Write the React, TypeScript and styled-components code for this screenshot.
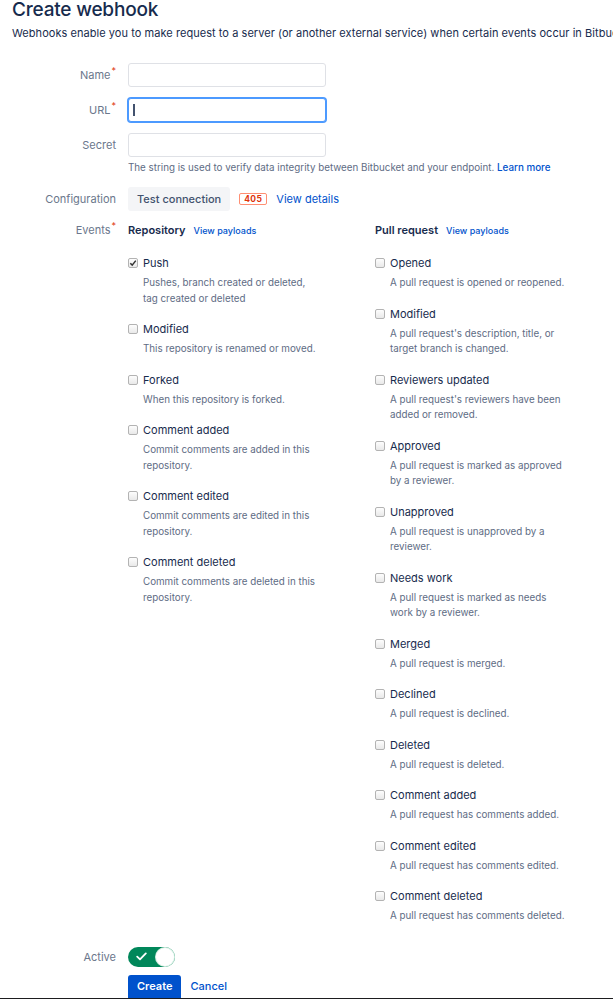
import React from "react";
import styled, { createGlobalStyle } from "styled-components";

const GlobalStyle = createGlobalStyle`
  html, body {
    margin: 0;
    background: #fff;
    overflow: hidden;
  }
  body {
    font-family: Inter, "Liberation Sans", Arial, sans-serif;
    color: #172b4d;
  }
`;

const Page = styled.div`
  padding: 0 12px;
  overflow: hidden;
`;

const Title = styled.h1`
  margin: 0;
  font-size: 19px;
  line-height: 20px;
  font-weight: 500;
  letter-spacing: -0.2px;
  color: #172b4d;
`;

const Intro = styled.p`
  margin: 5px 0 0;
  font-size: 11px;
  line-height: 16px;
  letter-spacing: 0.05px;
  white-space: nowrap;
  color: #172b4d;
`;

const Row = styled.div<{ $mt: number }>`
  display: grid;
  grid-template-columns: 104px 1fr;
  column-gap: 12px;
  margin-top: ${({ $mt }) => $mt}px;
`;

const Label = styled.div<{ $h: number }>`
  text-align: right;
  font-size: 11px;
  line-height: ${({ $h }) => $h}px;
  color: #6b778c;
  white-space: nowrap;
`;

const Req = styled.span`
  color: #de350b;
  font-size: 9px;
  vertical-align: top;
  position: relative;
  top: -4px;
  margin-left: 1px;
`;

const Field = styled.div<{ $focus?: boolean }>`
  box-sizing: border-box;
  width: 198px;
  height: 24px;
  border: 1px solid ${({ $focus }) => ($focus ? "#4c9aff" : "#dfe1e6")};
  box-shadow: ${({ $focus }) => ($focus ? "0 0 0 1px #4c9aff" : "none")};
  border-radius: 3px;
  background: #fff;
  display: flex;
  align-items: center;
  padding: 0 4px;
`;

const Caret = styled.span`
  width: 2px;
  height: 12px;
  background: #42526e;
`;

const Help = styled.div`
  margin-top: 3px;
  font-size: 9.8px;
  line-height: 16px;
  color: #5e6c84;
  white-space: nowrap;
`;

const Link = styled.a<{ $size?: number; $weight?: number }>`
  color: #0052cc;
  text-decoration: none;
  font-size: ${({ $size }) => ($size ? `${$size}px` : "inherit")};
  font-weight: ${({ $weight }) => $weight ?? "inherit"};
`;

const Inline = styled.div`
  display: flex;
  align-items: center;
`;

const GhostButton = styled.button`
  height: 24px;
  padding: 0 9px;
  border: 0;
  border-radius: 3px;
  background: #f4f5f7;
  color: #42526e;
  font-family: inherit;
  font-size: 11px;
  font-weight: 500;
`;

const Badge = styled.span`
  margin-left: 9px;
  box-sizing: border-box;
  height: 12px;
  padding: 0 4px;
  border: 1px solid #ff8f73;
  border-radius: 2px;
  font-size: 8.5px;
  line-height: 10px;
  font-weight: 700;
  color: #de350b;
  letter-spacing: 0.4px;
`;

const Spaced = styled.span`
  margin-left: 9px;
  font-size: 11px;
`;

const Columns = styled.div`
  display: grid;
  grid-template-columns: 247px 1fr;
`;

const GroupHead = styled.div`
  font-size: 11px;
  line-height: 16px;
  font-weight: 600;
  color: #172b4d;

  a {
    margin-left: 8px;
    font-weight: 500;
  }
`;

const List = styled.div`
  margin-top: 15px;
  display: flex;
  flex-direction: column;
  gap: 14px;
`;

const ItemHead = styled.div`
  display: flex;
  align-items: center;
  height: 18px;
  font-size: 11px;
  font-weight: 400;
  color: #172b4d;
`;

const Box = styled.span<{ $on?: boolean }>`
  box-sizing: border-box;
  width: 10px;
  height: 10px;
  margin-right: 5px;
  border: 1px solid #b3b3b3;
  border-radius: 2px;
  background: linear-gradient(#fdfdfd, #e9e9e9);
  display: flex;
  align-items: center;
  justify-content: center;
`;

const Desc = styled.div`
  margin-top: 3px;
  padding-left: 15px;
  max-width: 177px;
  font-size: 9.8px;
  line-height: 15.5px;
  color: #5e6c84;
`;

const Toggle = styled.div`
  box-sizing: border-box;
  width: 47px;
  height: 20px;
  border-radius: 10px;
  background: #00875a;
  display: flex;
  align-items: center;
  justify-content: space-between;
  padding: 0 1px 0 8px;
`;

const Knob = styled.span`
  width: 18px;
  height: 18px;
  border-radius: 50%;
  background: #fff;
  box-shadow: 0 0 0 1px #d6efe4;
`;

const Primary = styled.button`
  height: 23px;
  padding: 0 9px;
  border: 0;
  border-radius: 3px 3px 0 0;
  background: #0052cc;
  color: #fff;
  font-family: inherit;
  font-size: 11px;
  font-weight: 600;
`;

const BottomEdge = styled.div`
  height: 2px;
  background: #1d1d1f;
  margin: 0 -12px;
`;

type Ev = { name: string; desc: string; on?: boolean };

const repoEvents: Ev[] = [
  { name: "Push", desc: "Pushes, branch created or deleted, tag created or deleted", on: true },
  { name: "Modified", desc: "This repository is renamed or moved." },
  { name: "Forked", desc: "When this repository is forked." },
  { name: "Comment added", desc: "Commit comments are added in this repository." },
  { name: "Comment edited", desc: "Commit comments are edited in this repository." },
  { name: "Comment deleted", desc: "Commit comments are deleted in this repository." },
];

const prEvents: Ev[] = [
  { name: "Opened", desc: "A pull request is opened or reopened." },
  { name: "Modified", desc: "A pull request's description, title, or target branch is changed." },
  { name: "Reviewers updated", desc: "A pull request's reviewers have been added or removed." },
  { name: "Approved", desc: "A pull request is marked as approved by a reviewer." },
  { name: "Unapproved", desc: "A pull request is unapproved by a reviewer." },
  { name: "Needs work", desc: "A pull request is marked as needs work by a reviewer." },
  { name: "Merged", desc: "A pull request is merged." },
  { name: "Declined", desc: "A pull request is declined." },
  { name: "Deleted", desc: "A pull request is deleted." },
  { name: "Comment added", desc: "A pull request has comments added." },
  { name: "Comment edited", desc: "A pull request has comments edited." },
  { name: "Comment deleted", desc: "A pull request has comments deleted." },
];

function EventGroup({ title, events }: { title: string; events: Ev[] }) {
  return (
    <div>
      <GroupHead>
        {title}
        <Link href="#" $size={9}>View payloads</Link>
      </GroupHead>
      <List>
        {events.map((e) => (
          <div key={e.name}>
            <ItemHead>
              <Box $on={e.on}>
                {e.on && (
                  <svg width="8" height="8" viewBox="0 0 8 8">
                    <path d="M1.3 4.2 L3.2 6.1 L6.8 1.6" fill="none" stroke="#333" strokeWidth="1.5" />
                  </svg>
                )}
              </Box>
              {e.name}
            </ItemHead>
            <Desc>{e.desc}</Desc>
          </div>
        ))}
      </List>
    </div>
  );
}

export default function App() {
  return (
    <>
      <GlobalStyle />
      <Page>
        <Title>Create webhook</Title>
        <Intro>
          Webhooks enable you to make request to a server (or another external service) when certain events occur in Bitbucket.
        </Intro>

        <Row $mt={22}>
          <Label $h={24}>Name<Req>*</Req></Label>
          <Field />
        </Row>
        <Row $mt={11}>
          <Label $h={24}>URL<Req>*</Req></Label>
          <Field $focus>
            <Caret />
          </Field>
        </Row>
        <Row $mt={11}>
          <Label $h={24}>Secret</Label>
          <div>
            <Field />
            <Help>
              The string is used to verify data integrity between Bitbucket and your endpoint.{" "}
              <Link href="#" $weight={500}>Learn more</Link>
            </Help>
          </div>
        </Row>

        <Row $mt={11}>
          <Label $h={24}>Configuration</Label>
          <Inline>
            <GhostButton>Test connection</GhostButton>
            <Badge>405</Badge>
            <Spaced>
              <Link href="#">View details</Link>
            </Spaced>
          </Inline>
        </Row>

        <Row $mt={11}>
          <Label $h={16}>Events<Req>*</Req></Label>
          <Columns>
            <EventGroup title="Repository" events={repoEvents} />
            <EventGroup title="Pull request" events={prEvents} />
          </Columns>
        </Row>

        <Row $mt={23}>
          <Label $h={20}>Active</Label>
          <div>
            <Toggle>
              <svg width="11" height="9" viewBox="0 0 11 9">
                <path d="M1.2 4.6 L4 7.3 L9.8 1.4" fill="none" stroke="#fff" strokeWidth="1.8" strokeLinecap="round" strokeLinejoin="round" />
              </svg>
              <Knob />
            </Toggle>
          </div>
        </Row>

        <Row $mt={8}>
          <span />
          <Inline>
            <Primary>Create</Primary>
            <Spaced>
              <Link href="#" $weight={500}>Cancel</Link>
            </Spaced>
          </Inline>
        </Row>
        <BottomEdge />
      </Page>
    </>
  );
}
